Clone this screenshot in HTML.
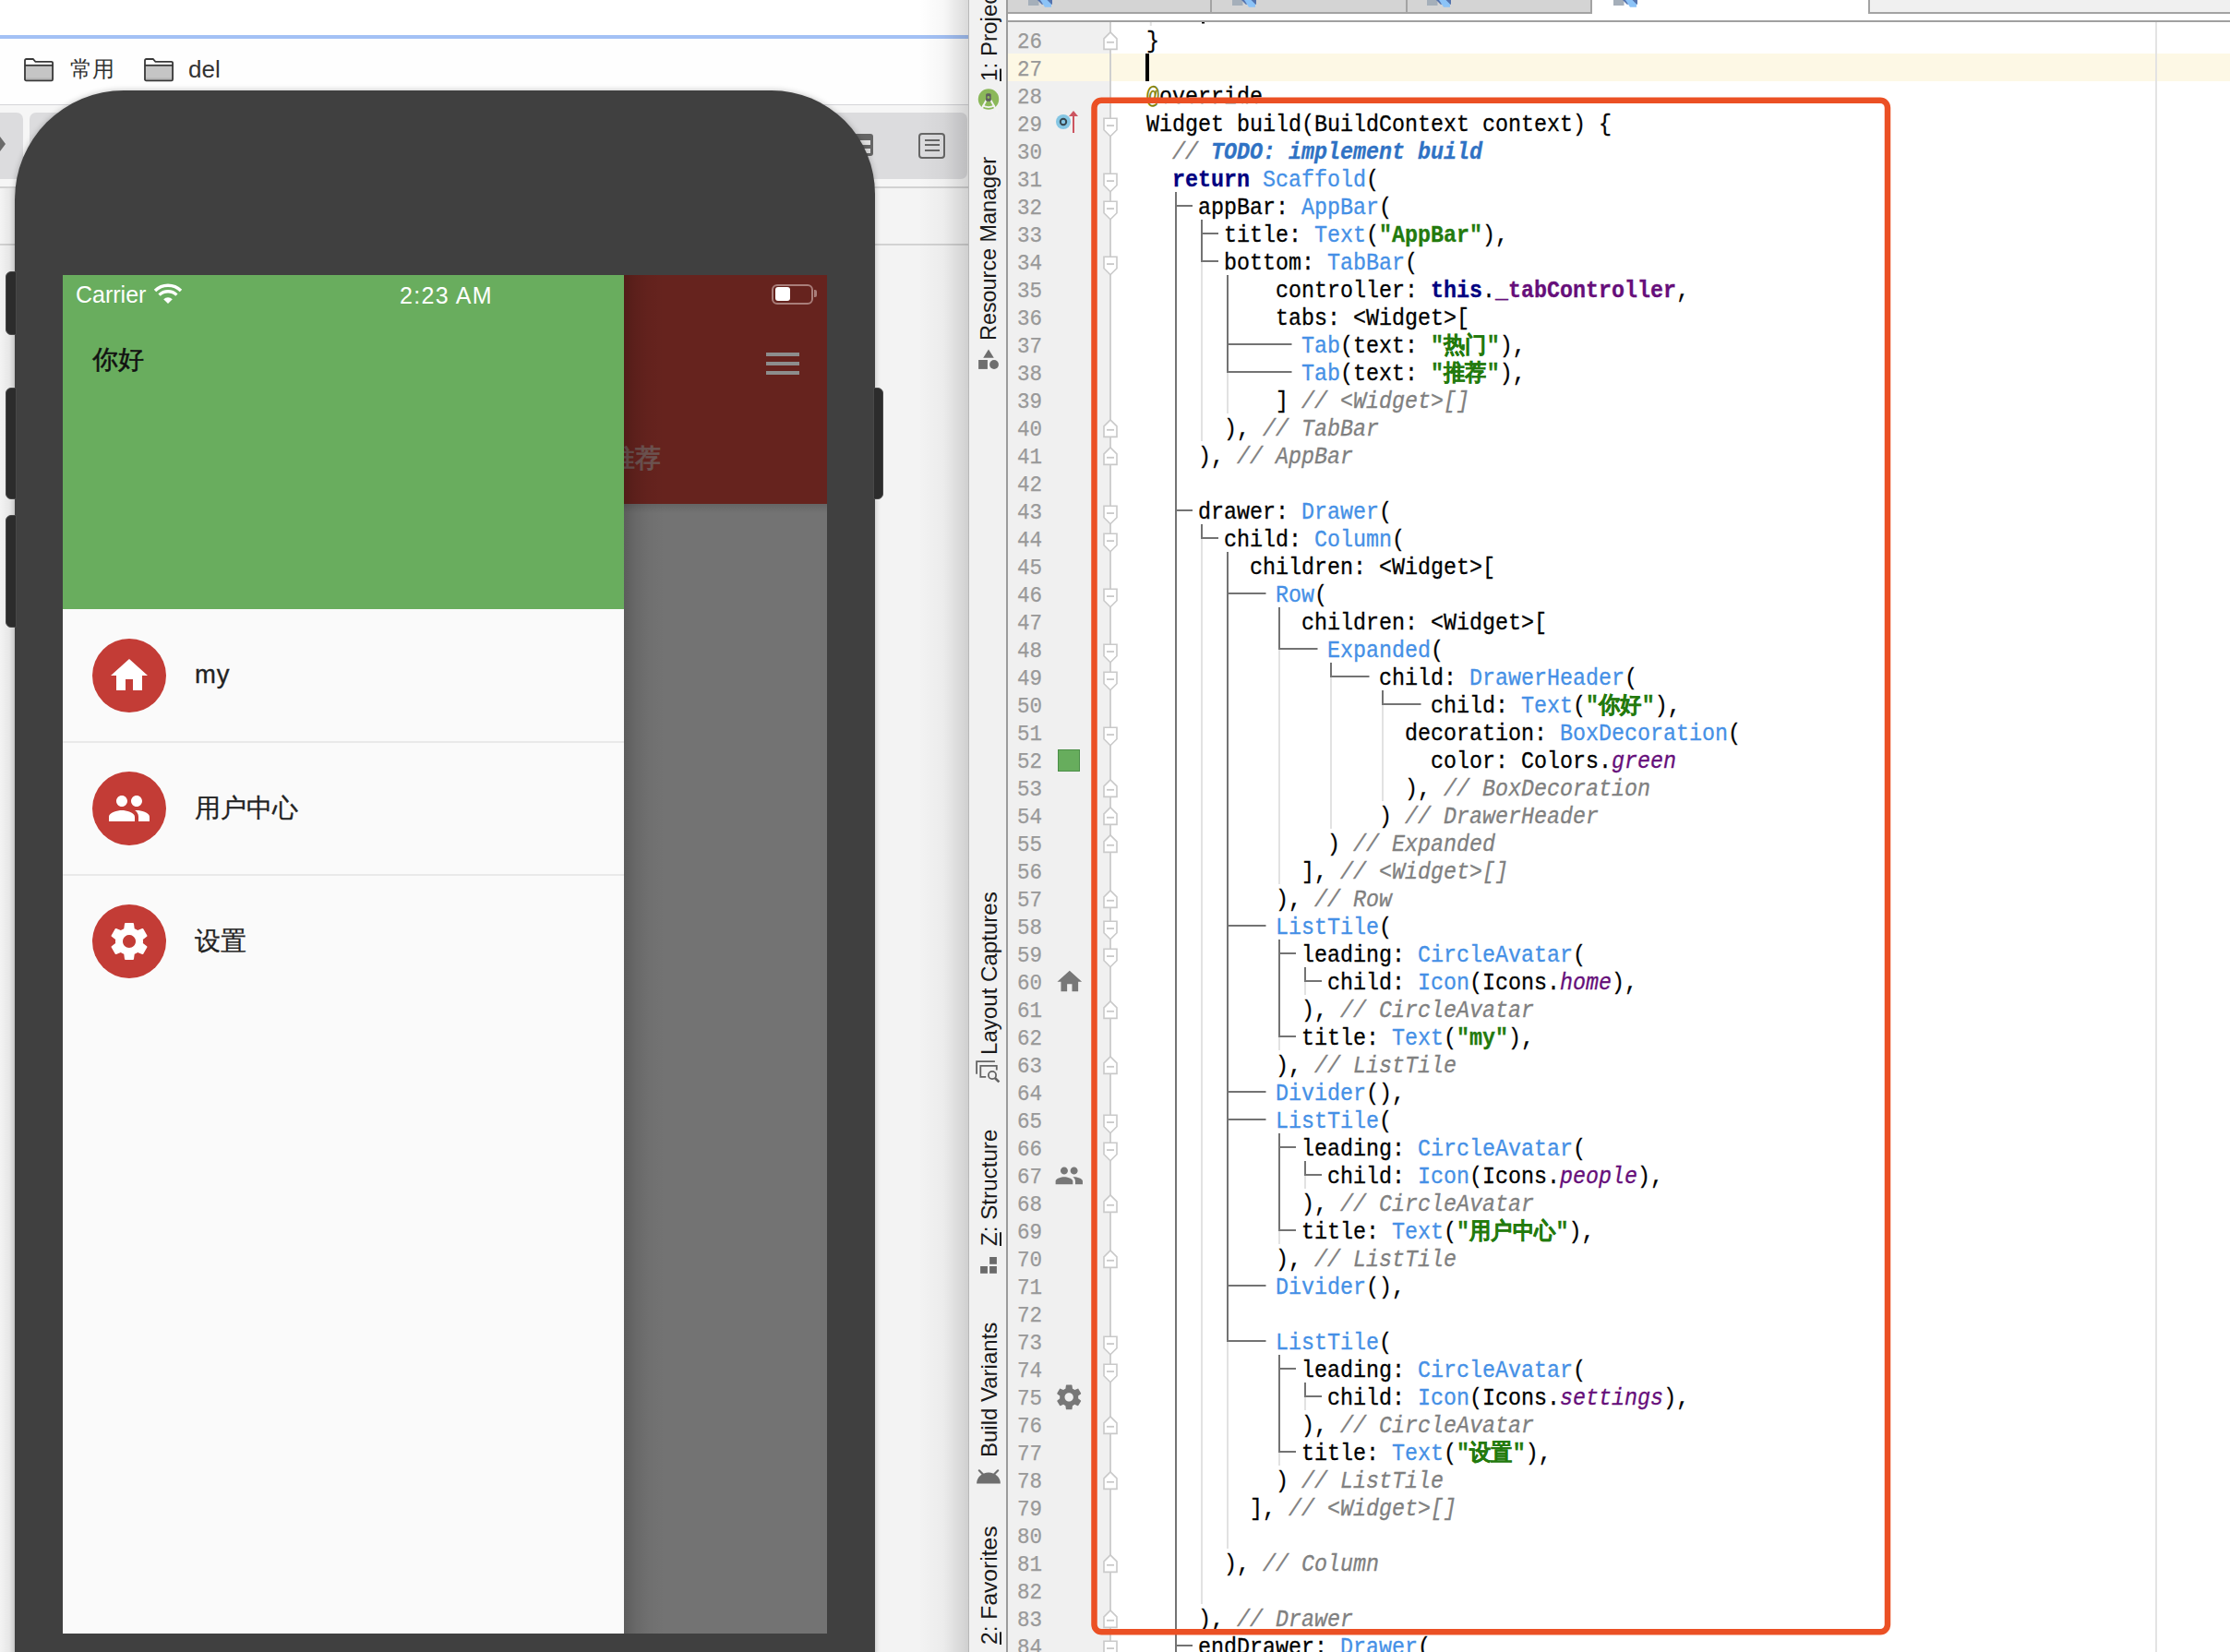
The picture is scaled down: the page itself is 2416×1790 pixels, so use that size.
<!DOCTYPE html>
<html><head><meta charset="utf-8">
<style>
*{box-sizing:border-box}
html,body{margin:0;padding:0}
body{width:2416px;height:1790px;overflow:hidden;position:relative;background:#fff;font-family:"Liberation Sans",sans-serif}
.abs{position:absolute}
/* browser */
#browser{position:absolute;left:0;top:0;width:1050px;height:1790px;background:#f3f3f3;overflow:hidden}
#bshade{position:absolute;left:995px;top:0;width:55px;height:1790px;background:linear-gradient(to right,rgba(0,0,0,0),rgba(0,0,0,0.03) 50%,rgba(0,0,0,0.15))}
#lshade{position:absolute;left:0;top:204px;width:16px;height:1590px;background:linear-gradient(to right,rgba(0,0,0,0),rgba(0,0,0,0.08))}
/* phone */
#phone{position:absolute;left:16px;top:98px;width:932px;height:1800px;background:#404040;border-radius:118px 112px 0 0;box-shadow:0 0 6px rgba(0,0,0,0.25)}
.btn{position:absolute;background:#2c2c2c;border:1.5px solid #484848}
#screen{position:absolute;left:68px;top:298px;width:828px;height:1472px;background:#737373;overflow:hidden}
/* ide */
#ide{position:absolute;left:1050px;top:0;width:1366px;height:1790px;background:#fff;overflow:hidden}
.cl{position:absolute;height:30px;line-height:30px;white-space:pre;font-family:"Liberation Mono",monospace;font-size:25px;color:#000;transform-origin:0 0;transform:scaleX(0.9334);-webkit-text-stroke:0.3px currentColor}
.ln{position:absolute;left:1081px;width:48px;-webkit-text-stroke:0.25px currentColor;text-align:right;height:30px;line-height:30px;font-family:"Liberation Mono",monospace;font-size:24px;color:#999;transform-origin:100% 0;transform:scaleX(0.94)}
.k{color:#000080;font-weight:bold}
.c{color:#4590e6}
.s{color:#237a0d;font-weight:bold}
.m{color:#808080;font-style:italic}
.t{color:#2f72c4;font-weight:bold;font-style:italic}
.f{color:#660e7a;font-weight:bold}
.i{color:#660e7a;font-style:italic}
.a{color:#808000}
.vt{position:absolute;transform-origin:0 0;transform:rotate(-90deg);white-space:nowrap;font-size:24.2px;color:#1a1a1a}
.av{position:absolute;left:100px;width:80px;height:80px;border-radius:50%;background:#c33c36}
.avi{position:absolute;left:116px}
.item{position:absolute;left:211px;font-size:27.5px;color:#222;-webkit-text-stroke:0.3px #222}
</style></head><body>
<div id="browser">
  <div class="abs" style="left:0;top:0;width:1050px;height:38px;background:#fff"></div>
  <div class="abs" style="left:0;top:38px;width:1050px;height:4px;background:#a3c1f5"></div>
  <div class="abs" style="left:0;top:42px;width:1050px;height:71px;background:#fefefe"></div>
  <div class="abs" style="left:0;top:112.5px;width:1050px;height:1.5px;background:#d4d4d8"></div>
  <div class="abs" style="left:0;top:114px;width:1050px;height:88px;background:#f6f6f6"></div>
  <div class="abs" style="left:-8px;top:122px;width:33px;height:72px;border-radius:7px;background:#dcdcde"></div>
  <div class="abs" style="left:32px;top:122px;width:1016px;height:72px;border-radius:7px;background:#dcdcde"></div>
  <div class="abs" style="left:0;top:148px;width:0;height:0;border-top:8px solid transparent;border-bottom:8px solid transparent;border-left:6px solid #6a6a6a"></div>
  <div class="abs" style="left:995px;top:144px;width:29px;height:28px;border:2px solid #666;border-radius:4px"></div>
  <div class="abs" style="left:1002px;top:150.5px;width:16px;height:2px;background:#666"></div>
  <div class="abs" style="left:1002px;top:156px;width:16px;height:2px;background:#666"></div>
  <div class="abs" style="left:1002px;top:161.5px;width:16px;height:2px;background:#666"></div>
  <div class="abs" style="left:920px;top:145px;width:26px;height:24px;border-radius:3px;background:#656565"></div>
  <div class="abs" style="left:922px;top:152px;width:21px;height:5.3px;background:#e0e0e0"></div>
  <div class="abs" style="left:922px;top:161px;width:21px;height:5px;background:#e0e0e0"></div>
  <div class="abs" style="left:0;top:202px;width:1050px;height:2px;background:#d2d2d2"></div>
  <div class="abs" style="left:0;top:204px;width:1050px;height:60px;background:#f4f4f4"></div>
  <div class="abs" style="left:0;top:264px;width:1050px;height:2px;background:#d2d2d2"></div>
  <!-- bookmarks -->
  <svg class="abs" style="left:26px;top:63px" width="33" height="26" viewBox="0 0 33 26"><path d="M1 2.5a1.5 1.5 0 0 1 1.5-1.5h7.3l2.6 2.8h17.2a1.5 1.5 0 0 1 1.5 1.5v17.6a1.5 1.5 0 0 1-1.5 1.5h-27.1a1.5 1.5 0 0 1-1.5-1.5z" fill="#fff"/><rect x="1.5" y="8" width="29.5" height="15.5" fill="#c5c5c5"/><rect x="1.5" y="21.5" width="29.5" height="2" fill="#b4b4b4"/><path d="M1 7.8h30.6" stroke="#383838" stroke-width="1.8"/><path d="M1 2.5a1.5 1.5 0 0 1 1.5-1.5h7.3l2.6 2.8h17.2a1.5 1.5 0 0 1 1.5 1.5v17.6a1.5 1.5 0 0 1-1.5 1.5h-27.1a1.5 1.5 0 0 1-1.5-1.5z" fill="none" stroke="#383838" stroke-width="1.8"/></svg>
  <div class="abs" style="left:76px;top:60px;font-size:24px;color:#333;line-height:30px">常用</div>
  <svg class="abs" style="left:156px;top:63px" width="33" height="26" viewBox="0 0 33 26"><path d="M1 2.5a1.5 1.5 0 0 1 1.5-1.5h7.3l2.6 2.8h17.2a1.5 1.5 0 0 1 1.5 1.5v17.6a1.5 1.5 0 0 1-1.5 1.5h-27.1a1.5 1.5 0 0 1-1.5-1.5z" fill="#fff"/><rect x="1.5" y="8" width="29.5" height="15.5" fill="#c5c5c5"/><rect x="1.5" y="21.5" width="29.5" height="2" fill="#b4b4b4"/><path d="M1 7.8h30.6" stroke="#383838" stroke-width="1.8"/><path d="M1 2.5a1.5 1.5 0 0 1 1.5-1.5h7.3l2.6 2.8h17.2a1.5 1.5 0 0 1 1.5 1.5v17.6a1.5 1.5 0 0 1-1.5 1.5h-27.1a1.5 1.5 0 0 1-1.5-1.5z" fill="none" stroke="#383838" stroke-width="1.8"/></svg>
  <div class="abs" style="left:204px;top:60px;font-size:26px;color:#333;line-height:30px">del</div>
  <div id="bshade"></div>
  <div id="lshade"></div>
  <div class="abs" style="left:1048.5px;top:0;width:1.5px;height:1790px;background:#b8b8b8"></div>
</div>

<div id="phone"></div>
<div class="btn" style="left:6px;top:294px;width:12px;height:69px;border-radius:6px 0 0 6px"></div>
<div class="btn" style="left:6px;top:420px;width:12px;height:121px;border-radius:6px 0 0 6px"></div>
<div class="btn" style="left:6px;top:558px;width:12px;height:122px;border-radius:6px 0 0 6px"></div>
<div class="btn" style="left:946px;top:420px;width:11px;height:121px;border-radius:0 6px 6px 0"></div>

<div id="screen">
  <div class="abs" style="left:0;top:0;width:828px;height:248px;background:#66231e"></div>
  <div class="abs" style="left:0;top:248px;width:828px;height:10px;background:linear-gradient(rgba(0,0,0,0.12),rgba(0,0,0,0))"></div>
  <div class="abs" style="left:762px;top:84px;width:36px;height:4px;background:#8d8d8d"></div>
  <div class="abs" style="left:762px;top:94px;width:36px;height:4px;background:#8d8d8d"></div>
  <div class="abs" style="left:762px;top:104px;width:36px;height:4px;background:#8d8d8d"></div>
  <div class="abs" style="left:768px;top:9.5px;width:45px;height:22px;border:2px solid #a97e7a;border-radius:6px"></div>
  <div class="abs" style="left:772px;top:13px;width:16px;height:15px;background:#fff;border-radius:3px"></div>
  <div class="abs" style="left:814px;top:16px;width:3px;height:8px;background:#a97e7a;border-radius:0 2px 2px 0"></div>
  <div class="abs" style="left:592px;top:181px;font-size:28px;color:#6e5552;line-height:36px;-webkit-text-stroke:0.9px #6e5552">推荐</div>
  <div class="abs" style="left:608px;top:0;width:44px;height:1472px;background:linear-gradient(to right,rgba(0,0,0,0.2),rgba(0,0,0,0.09) 30%,rgba(0,0,0,0.03) 60%,rgba(0,0,0,0))"></div>
  <!-- drawer -->
  <div class="abs" style="left:0;top:0;width:608px;height:1472px;background:#fafafa">
    <div class="abs" style="left:0;top:0;width:608px;height:362px;background:#69ad5e"></div>
  </div>
</div>
<!-- status bar and drawer content in page coords -->
<div class="abs" style="left:82px;top:303.5px;font-size:25px;color:#fff;line-height:30px">Carrier</div>
<svg class="abs" style="left:166px;top:306px" width="32" height="24" viewBox="0 0 32 24"><path d="M16 23 L11.2 18.2 A7 7 0 0 1 20.8 18.2 Z" fill="#fff"/><path d="M6.6 13.6 A13.5 13.5 0 0 1 25.4 13.6" fill="none" stroke="#fff" stroke-width="3.4"/><path d="M2 9 A20 20 0 0 1 30 9" fill="none" stroke="#fff" stroke-width="3.4"/></svg>
<div class="abs" style="left:433px;top:304.5px;font-size:25px;color:#fff;line-height:30px;letter-spacing:1.3px">2:23 AM</div>
<div class="abs" style="left:100px;top:373px;font-size:28px;color:#111;line-height:34px;-webkit-text-stroke:0.5px #111">你好</div>
<div class="av" style="top:692px"></div><svg class="avi" style="top:708px" viewBox="0 0 24 24" width="48" height="48"><path d="M10 20v-6h4v6h5v-8h3L12 3 2 12h3v8z" fill="#fff"/></svg><div class="av" style="top:836px"></div><svg class="avi" style="top:852px" viewBox="0 0 24 24" width="48" height="48"><path d="M16 11c1.66 0 2.99-1.34 2.99-3S17.66 5 16 5c-1.66 0-3 1.34-3 3s1.34 3 3 3zm-8 0c1.66 0 2.99-1.34 2.99-3S9.66 5 8 5C6.34 5 5 6.34 5 8s1.34 3 3 3zm0 2c-2.33 0-7 1.17-7 3.5V19h14v-2.5c0-2.33-4.67-3.5-7-3.5zm8 0c-.29 0-.62.02-.97.05 1.16.84 1.97 1.97 1.97 3.45V19h6v-2.5c0-2.33-4.67-3.5-7-3.5z" fill="#fff"/></svg><div class="av" style="top:980px"></div><svg class="avi" style="top:996px" viewBox="0 0 24 24" width="48" height="48"><path d="M19.43 12.98c.04-.32.07-.64.07-.98s-.03-.66-.07-.98l2.11-1.65c.19-.15.24-.42.12-.64l-2-3.46c-.12-.22-.39-.3-.61-.22l-2.49 1c-.52-.4-1.08-.73-1.69-.98l-.38-2.65C14.46 2.18 14.25 2 14 2h-4c-.25 0-.46.18-.49.42l-.38 2.65c-.61.25-1.17.59-1.69.98l-2.49-1c-.23-.09-.49 0-.61.22l-2 3.46c-.13.22-.07.49.12.64l2.11 1.65c-.04.32-.07.65-.07.98s.03.66.07.98l-2.11 1.65c-.19.15-.24.42-.12.64l2 3.46c.12.22.39.3.61.22l2.49-1c.52.4 1.08.73 1.69.98l.38 2.65c.03.24.24.42.49.42h4c.25 0 .46-.18.49-.42l.38-2.65c.61-.25 1.17-.59 1.69-.98l2.49 1c.23.09.49 0 .61-.22l2-3.46c.12-.22.07-.49-.12-.64l-2.11-1.65zM12 15.5c-1.93 0-3.5-1.57-3.5-3.5s1.57-3.5 3.5-3.5 3.5 1.57 3.5 3.5-1.57 3.5-3.5 3.5z" fill="#fff"/></svg>
<div class="item" style="top:713px;line-height:36px;letter-spacing:0.8px">my</div>
<div class="abs" style="left:68px;top:803px;width:608px;height:2px;background:#e9e9e9"></div>
<div class="item" style="top:858px;line-height:36px">用户中心</div>
<div class="abs" style="left:68px;top:947px;width:608px;height:2px;background:#e9e9e9"></div>
<div class="item" style="top:1002px;line-height:36px">设置</div>

<div id="ide">
  <!-- tool strip -->
  <div class="abs" style="left:0;top:0;width:40px;height:1790px;background:#f1f1f1"></div>
  <div class="abs" style="left:39.5px;top:0;width:2px;height:1790px;background:#9c9c9c"></div>
  <!-- tabs -->
  <div class="abs" style="left:42px;top:0;width:1324px;height:14px;background:#f0f0f0"></div>
  <div class="abs" style="left:42px;top:0;width:631px;height:13px;background:#d4d4d4"></div>
  <div class="abs" style="left:42px;top:13px;width:631px;height:2px;background:#a3a3a3"></div>
  <div class="abs" style="left:260.5px;top:0;width:2px;height:14px;background:#a3a3a3"></div>
  <div class="abs" style="left:472.5px;top:0;width:2px;height:14px;background:#a3a3a3"></div>
  <div class="abs" style="left:675px;top:0;width:299px;height:15px;background:#fff"></div>
  <div class="abs" style="left:673px;top:0;width:2px;height:15px;background:#a3a3a3"></div>
  <div class="abs" style="left:974px;top:0;width:2px;height:15px;background:#a3a3a3"></div>
  <div class="abs" style="left:976px;top:13px;width:390px;height:2px;background:#a3a3a3"></div>
  <div class="abs" style="left:42px;top:15px;width:1324px;height:7.5px;background:#fff"></div>
  <div class="abs" style="left:42px;top:22px;width:1324px;height:2px;background:#a0a0a0"></div>
  <svg class="abs" style="left:64.0px;top:0" width="28" height="9" viewBox="0 0 28 9"><rect x="0" y="0" width="11.5" height="6" fill="#a5afba"/><path d="M10 0h16v4.7h-11.3z" fill="#5473ad"/><path d="M13 0h7.5l4.5 4.6v3.2h-7z" fill="#8cc3f7"/></svg><svg class="abs" style="left:284.5px;top:0" width="28" height="9" viewBox="0 0 28 9"><rect x="0" y="0" width="11.5" height="6" fill="#a5afba"/><path d="M10 0h16v4.7h-11.3z" fill="#5473ad"/><path d="M13 0h7.5l4.5 4.6v3.2h-7z" fill="#8cc3f7"/></svg><svg class="abs" style="left:495.6px;top:0" width="28" height="9" viewBox="0 0 28 9"><rect x="0" y="0" width="11.5" height="6" fill="#a5afba"/><path d="M10 0h16v4.7h-11.3z" fill="#5473ad"/><path d="M13 0h7.5l4.5 4.6v3.2h-7z" fill="#8cc3f7"/></svg><svg class="abs" style="left:698.0px;top:0" width="28" height="9" viewBox="0 0 28 9"><rect x="0" y="0" width="11.5" height="6" fill="#a5afba"/><path d="M10 0h16v4.7h-11.3z" fill="#5473ad"/><path d="M13 0h7.5l4.5 4.6v3.2h-7z" fill="#8cc3f7"/></svg>
  <!-- gutter -->
  <div class="abs" style="left:42px;top:24px;width:111px;height:1766px;background:#f0f0f0"></div>
  <div class="abs" style="left:1285px;top:24px;width:1.5px;height:1766px;background:#e3e3e3"></div>
</div>
<!-- current line highlight -->
<div class="abs" style="left:1092px;top:58px;width:1324px;height:30px;background:#fdf8e5"></div>
<div class="abs" style="left:1202px;top:24px;width:2px;height:1766px;background:#cfcfcf"></div>
<div class="abs" style="left:2335px;top:24px;width:1.5px;height:1766px;background:#e3e3e3"></div>
<div class="abs" style="left:1241px;top:58px;width:4px;height:30px;background:#000"></div>
<div class="ln" style="top:31.0px">26</div><div class="ln" style="top:61.0px">27</div><div class="ln" style="top:91.0px">28</div><div class="ln" style="top:121.0px">29</div><div class="ln" style="top:151.0px">30</div><div class="ln" style="top:181.0px">31</div><div class="ln" style="top:211.0px">32</div><div class="ln" style="top:241.0px">33</div><div class="ln" style="top:271.0px">34</div><div class="ln" style="top:301.0px">35</div><div class="ln" style="top:331.0px">36</div><div class="ln" style="top:361.0px">37</div><div class="ln" style="top:391.0px">38</div><div class="ln" style="top:421.0px">39</div><div class="ln" style="top:451.0px">40</div><div class="ln" style="top:481.0px">41</div><div class="ln" style="top:511.0px">42</div><div class="ln" style="top:541.0px">43</div><div class="ln" style="top:571.0px">44</div><div class="ln" style="top:601.0px">45</div><div class="ln" style="top:631.0px">46</div><div class="ln" style="top:661.0px">47</div><div class="ln" style="top:691.0px">48</div><div class="ln" style="top:721.0px">49</div><div class="ln" style="top:751.0px">50</div><div class="ln" style="top:781.0px">51</div><div class="ln" style="top:811.0px">52</div><div class="ln" style="top:841.0px">53</div><div class="ln" style="top:871.0px">54</div><div class="ln" style="top:901.0px">55</div><div class="ln" style="top:931.0px">56</div><div class="ln" style="top:961.0px">57</div><div class="ln" style="top:991.0px">58</div><div class="ln" style="top:1021.0px">59</div><div class="ln" style="top:1051.0px">60</div><div class="ln" style="top:1081.0px">61</div><div class="ln" style="top:1111.0px">62</div><div class="ln" style="top:1141.0px">63</div><div class="ln" style="top:1171.0px">64</div><div class="ln" style="top:1201.0px">65</div><div class="ln" style="top:1231.0px">66</div><div class="ln" style="top:1261.0px">67</div><div class="ln" style="top:1291.0px">68</div><div class="ln" style="top:1321.0px">69</div><div class="ln" style="top:1351.0px">70</div><div class="ln" style="top:1381.0px">71</div><div class="ln" style="top:1411.0px">72</div><div class="ln" style="top:1441.0px">73</div><div class="ln" style="top:1471.0px">74</div><div class="ln" style="top:1501.0px">75</div><div class="ln" style="top:1531.0px">76</div><div class="ln" style="top:1561.0px">77</div><div class="ln" style="top:1591.0px">78</div><div class="ln" style="top:1621.0px">79</div><div class="ln" style="top:1651.0px">80</div><div class="ln" style="top:1681.0px">81</div><div class="ln" style="top:1711.0px">82</div><div class="ln" style="top:1741.0px">83</div><div class="ln" style="top:1771.0px">84</div>
<div class="cl" style="top:30.5px;left:1241.5px">}</div><div class="cl" style="top:90.5px;left:1241.5px"><span class="a">@</span>override</div><div class="cl" style="top:120.5px;left:1241.5px">Widget build(BuildContext context) {</div><div class="cl" style="top:150.5px;left:1269.5px"><span class="m">// </span><span class="t">TODO: implement build</span></div><div class="cl" style="top:180.5px;left:1269.5px"><span class="k">return</span> <span class="c">Scaffold</span>(</div><div class="cl" style="top:210.5px;left:1297.5px">appBar: <span class="c">AppBar</span>(</div><div class="cl" style="top:240.5px;left:1325.5px">title: <span class="c">Text</span>(<span class="s">&quot;AppBar&quot;</span>),</div><div class="cl" style="top:270.5px;left:1325.5px">bottom: <span class="c">TabBar</span>(</div><div class="cl" style="top:300.5px;left:1381.5px">controller: <span class="k">this</span>.<span class="f">_tabController</span>,</div><div class="cl" style="top:330.5px;left:1381.5px">tabs: &lt;Widget&gt;[</div><div class="cl" style="top:360.5px;left:1409.5px"><span class="c">Tab</span>(text: <span class="s">&quot;热门&quot;</span>),</div><div class="cl" style="top:390.5px;left:1409.5px"><span class="c">Tab</span>(text: <span class="s">&quot;推荐&quot;</span>),</div><div class="cl" style="top:420.5px;left:1381.5px">] <span class="m">// &lt;Widget&gt;[]</span></div><div class="cl" style="top:450.5px;left:1325.5px">), <span class="m">// TabBar</span></div><div class="cl" style="top:480.5px;left:1297.5px">), <span class="m">// AppBar</span></div><div class="cl" style="top:540.5px;left:1297.5px">drawer: <span class="c">Drawer</span>(</div><div class="cl" style="top:570.5px;left:1325.5px">child: <span class="c">Column</span>(</div><div class="cl" style="top:600.5px;left:1353.5px">children: &lt;Widget&gt;[</div><div class="cl" style="top:630.5px;left:1381.5px"><span class="c">Row</span>(</div><div class="cl" style="top:660.5px;left:1409.5px">children: &lt;Widget&gt;[</div><div class="cl" style="top:690.5px;left:1437.5px"><span class="c">Expanded</span>(</div><div class="cl" style="top:720.5px;left:1493.5px">child: <span class="c">DrawerHeader</span>(</div><div class="cl" style="top:750.5px;left:1549.5px">child: <span class="c">Text</span>(<span class="s">&quot;你好&quot;</span>),</div><div class="cl" style="top:780.5px;left:1521.5px">decoration: <span class="c">BoxDecoration</span>(</div><div class="cl" style="top:810.5px;left:1549.5px">color: Colors.<span class="i">green</span></div><div class="cl" style="top:840.5px;left:1521.5px">), <span class="m">// BoxDecoration</span></div><div class="cl" style="top:870.5px;left:1493.5px">) <span class="m">// DrawerHeader</span></div><div class="cl" style="top:900.5px;left:1437.5px">) <span class="m">// Expanded</span></div><div class="cl" style="top:930.5px;left:1409.5px">], <span class="m">// &lt;Widget&gt;[]</span></div><div class="cl" style="top:960.5px;left:1381.5px">), <span class="m">// Row</span></div><div class="cl" style="top:990.5px;left:1381.5px"><span class="c">ListTile</span>(</div><div class="cl" style="top:1020.5px;left:1409.5px">leading: <span class="c">CircleAvatar</span>(</div><div class="cl" style="top:1050.5px;left:1437.5px">child: <span class="c">Icon</span>(Icons.<span class="i">home</span>),</div><div class="cl" style="top:1080.5px;left:1409.5px">), <span class="m">// CircleAvatar</span></div><div class="cl" style="top:1110.5px;left:1409.5px">title: <span class="c">Text</span>(<span class="s">&quot;my&quot;</span>),</div><div class="cl" style="top:1140.5px;left:1381.5px">), <span class="m">// ListTile</span></div><div class="cl" style="top:1170.5px;left:1381.5px"><span class="c">Divider</span>(),</div><div class="cl" style="top:1200.5px;left:1381.5px"><span class="c">ListTile</span>(</div><div class="cl" style="top:1230.5px;left:1409.5px">leading: <span class="c">CircleAvatar</span>(</div><div class="cl" style="top:1260.5px;left:1437.5px">child: <span class="c">Icon</span>(Icons.<span class="i">people</span>),</div><div class="cl" style="top:1290.5px;left:1409.5px">), <span class="m">// CircleAvatar</span></div><div class="cl" style="top:1320.5px;left:1409.5px">title: <span class="c">Text</span>(<span class="s">&quot;用户中心&quot;</span>),</div><div class="cl" style="top:1350.5px;left:1381.5px">), <span class="m">// ListTile</span></div><div class="cl" style="top:1380.5px;left:1381.5px"><span class="c">Divider</span>(),</div><div class="cl" style="top:1440.5px;left:1381.5px"><span class="c">ListTile</span>(</div><div class="cl" style="top:1470.5px;left:1409.5px">leading: <span class="c">CircleAvatar</span>(</div><div class="cl" style="top:1500.5px;left:1437.5px">child: <span class="c">Icon</span>(Icons.<span class="i">settings</span>),</div><div class="cl" style="top:1530.5px;left:1409.5px">), <span class="m">// CircleAvatar</span></div><div class="cl" style="top:1560.5px;left:1409.5px">title: <span class="c">Text</span>(<span class="s">&quot;设置&quot;</span>),</div><div class="cl" style="top:1590.5px;left:1381.5px">) <span class="m">// ListTile</span></div><div class="cl" style="top:1620.5px;left:1353.5px">], <span class="m">// &lt;Widget&gt;[]</span></div><div class="cl" style="top:1680.5px;left:1325.5px">), <span class="m">// Column</span></div><div class="cl" style="top:1740.5px;left:1297.5px">), <span class="m">// Drawer</span></div><div class="cl" style="top:1770.5px;left:1297.5px">endDrawer: <span class="c">Drawer</span>(</div>
<svg class="abs" style="left:0;top:0" width="2416" height="1790"><rect x="1301.0" y="283.0" width="2" height="195.0" fill="#e2e2e2"/><rect x="1329.0" y="403.0" width="2" height="45.0" fill="#e2e2e2"/><rect x="1301.0" y="583.0" width="2" height="1155.0" fill="#e2e2e2"/><rect x="1329.0" y="1453.0" width="2" height="225.0" fill="#e2e2e2"/><rect x="1385.0" y="703.0" width="2" height="255.0" fill="#e2e2e2"/><rect x="1441.0" y="733.0" width="2" height="165.0" fill="#e2e2e2"/><rect x="1497.0" y="763.0" width="2" height="105.0" fill="#e2e2e2"/><rect x="1385.0" y="1123.0" width="2" height="15.0" fill="#e2e2e2"/><rect x="1413.0" y="1063.0" width="2" height="15.0" fill="#e2e2e2"/><rect x="1385.0" y="1333.0" width="2" height="15.0" fill="#e2e2e2"/><rect x="1413.0" y="1273.0" width="2" height="15.0" fill="#e2e2e2"/><rect x="1385.0" y="1573.0" width="2" height="15.0" fill="#e2e2e2"/><rect x="1413.0" y="1513.0" width="2" height="15.0" fill="#e2e2e2"/><rect x="1273.0" y="208.0" width="2" height="1582.0" fill="#737373"/><rect x="1301.0" y="238.0" width="2" height="45.0" fill="#737373"/><rect x="1329.0" y="298.0" width="2" height="105.0" fill="#737373"/><rect x="1301.0" y="568.0" width="2" height="15.0" fill="#737373"/><rect x="1329.0" y="598.0" width="2" height="855.0" fill="#737373"/><rect x="1385.0" y="658.0" width="2" height="45.0" fill="#737373"/><rect x="1441.0" y="718.0" width="2" height="15.0" fill="#737373"/><rect x="1497.0" y="748.0" width="2" height="15.0" fill="#737373"/><rect x="1385.0" y="1018.0" width="2" height="105.0" fill="#737373"/><rect x="1413.0" y="1048.0" width="2" height="15.0" fill="#737373"/><rect x="1385.0" y="1228.0" width="2" height="105.0" fill="#737373"/><rect x="1413.0" y="1258.0" width="2" height="15.0" fill="#737373"/><rect x="1385.0" y="1468.0" width="2" height="105.0" fill="#737373"/><rect x="1413.0" y="1498.0" width="2" height="15.0" fill="#737373"/><rect x="1273.0" y="222.0" width="19.0" height="2" fill="#737373"/><rect x="1273.0" y="552.0" width="19.0" height="2" fill="#737373"/><rect x="1273.0" y="1782.0" width="19.0" height="2" fill="#737373"/><rect x="1301.0" y="252.0" width="19.0" height="2" fill="#737373"/><rect x="1301.0" y="282.0" width="19.0" height="2" fill="#737373"/><rect x="1329.0" y="372.0" width="70.5" height="2" fill="#737373"/><rect x="1329.0" y="402.0" width="70.5" height="2" fill="#737373"/><rect x="1301.0" y="582.0" width="19.0" height="2" fill="#737373"/><rect x="1329.0" y="642.0" width="42.5" height="2" fill="#737373"/><rect x="1329.0" y="1002.0" width="42.5" height="2" fill="#737373"/><rect x="1329.0" y="1182.0" width="42.5" height="2" fill="#737373"/><rect x="1329.0" y="1212.0" width="42.5" height="2" fill="#737373"/><rect x="1329.0" y="1392.0" width="42.5" height="2" fill="#737373"/><rect x="1329.0" y="1452.0" width="42.5" height="2" fill="#737373"/><rect x="1385.0" y="702.0" width="42.5" height="2" fill="#737373"/><rect x="1441.0" y="732.0" width="42.5" height="2" fill="#737373"/><rect x="1497.0" y="762.0" width="42.5" height="2" fill="#737373"/><rect x="1385.0" y="1032.0" width="19.0" height="2" fill="#737373"/><rect x="1385.0" y="1122.0" width="19.0" height="2" fill="#737373"/><rect x="1413.0" y="1062.0" width="19.0" height="2" fill="#737373"/><rect x="1385.0" y="1242.0" width="19.0" height="2" fill="#737373"/><rect x="1385.0" y="1332.0" width="19.0" height="2" fill="#737373"/><rect x="1413.0" y="1272.0" width="19.0" height="2" fill="#737373"/><rect x="1385.0" y="1482.0" width="19.0" height="2" fill="#737373"/><rect x="1385.0" y="1572.0" width="19.0" height="2" fill="#737373"/><rect x="1413.0" y="1512.0" width="19.0" height="2" fill="#737373"/><rect x="1245.8" y="24" width="2" height="4" fill="#e2e2e2"/><rect x="1302" y="24" width="3" height="1.5" fill="#000"/><path d="M1196.0 128.2h14v12.5l-7 7l-7 -7z" fill="#fff" stroke="#c9c9c9" stroke-width="1.6"/><rect x="1199.0" y="135.2" width="8" height="1.8" fill="#c9c9c9"/><path d="M1196.0 188.2h14v12.5l-7 7l-7 -7z" fill="#fff" stroke="#c9c9c9" stroke-width="1.6"/><rect x="1199.0" y="195.2" width="8" height="1.8" fill="#c9c9c9"/><path d="M1196.0 218.2h14v12.5l-7 7l-7 -7z" fill="#fff" stroke="#c9c9c9" stroke-width="1.6"/><rect x="1199.0" y="225.2" width="8" height="1.8" fill="#c9c9c9"/><path d="M1196.0 278.2h14v12.5l-7 7l-7 -7z" fill="#fff" stroke="#c9c9c9" stroke-width="1.6"/><rect x="1199.0" y="285.2" width="8" height="1.8" fill="#c9c9c9"/><path d="M1196.0 548.2h14v12.5l-7 7l-7 -7z" fill="#fff" stroke="#c9c9c9" stroke-width="1.6"/><rect x="1199.0" y="555.2" width="8" height="1.8" fill="#c9c9c9"/><path d="M1196.0 578.2h14v12.5l-7 7l-7 -7z" fill="#fff" stroke="#c9c9c9" stroke-width="1.6"/><rect x="1199.0" y="585.2" width="8" height="1.8" fill="#c9c9c9"/><path d="M1196.0 638.2h14v12.5l-7 7l-7 -7z" fill="#fff" stroke="#c9c9c9" stroke-width="1.6"/><rect x="1199.0" y="645.2" width="8" height="1.8" fill="#c9c9c9"/><path d="M1196.0 698.2h14v12.5l-7 7l-7 -7z" fill="#fff" stroke="#c9c9c9" stroke-width="1.6"/><rect x="1199.0" y="705.2" width="8" height="1.8" fill="#c9c9c9"/><path d="M1196.0 728.2h14v12.5l-7 7l-7 -7z" fill="#fff" stroke="#c9c9c9" stroke-width="1.6"/><rect x="1199.0" y="735.2" width="8" height="1.8" fill="#c9c9c9"/><path d="M1196.0 788.2h14v12.5l-7 7l-7 -7z" fill="#fff" stroke="#c9c9c9" stroke-width="1.6"/><rect x="1199.0" y="795.2" width="8" height="1.8" fill="#c9c9c9"/><path d="M1196.0 998.2h14v12.5l-7 7l-7 -7z" fill="#fff" stroke="#c9c9c9" stroke-width="1.6"/><rect x="1199.0" y="1005.2" width="8" height="1.8" fill="#c9c9c9"/><path d="M1196.0 1028.2h14v12.5l-7 7l-7 -7z" fill="#fff" stroke="#c9c9c9" stroke-width="1.6"/><rect x="1199.0" y="1035.2" width="8" height="1.8" fill="#c9c9c9"/><path d="M1196.0 1208.2h14v12.5l-7 7l-7 -7z" fill="#fff" stroke="#c9c9c9" stroke-width="1.6"/><rect x="1199.0" y="1215.2" width="8" height="1.8" fill="#c9c9c9"/><path d="M1196.0 1238.2h14v12.5l-7 7l-7 -7z" fill="#fff" stroke="#c9c9c9" stroke-width="1.6"/><rect x="1199.0" y="1245.2" width="8" height="1.8" fill="#c9c9c9"/><path d="M1196.0 1448.2h14v12.5l-7 7l-7 -7z" fill="#fff" stroke="#c9c9c9" stroke-width="1.6"/><rect x="1199.0" y="1455.2" width="8" height="1.8" fill="#c9c9c9"/><path d="M1196.0 1478.2h14v12.5l-7 7l-7 -7z" fill="#fff" stroke="#c9c9c9" stroke-width="1.6"/><rect x="1199.0" y="1485.2" width="8" height="1.8" fill="#c9c9c9"/><path d="M1196.0 1778.2h14v12.5l-7 7l-7 -7z" fill="#fff" stroke="#c9c9c9" stroke-width="1.6"/><rect x="1199.0" y="1785.2" width="8" height="1.8" fill="#c9c9c9"/><path d="M1196.0 53.4h14v-11.5l-7 -7l-7 7z" fill="#fff" stroke="#c9c9c9" stroke-width="1.6"/><rect x="1199.0" y="44.9" width="8" height="1.8" fill="#c9c9c9"/><path d="M1196.0 473.4h14v-11.5l-7 -7l-7 7z" fill="#fff" stroke="#c9c9c9" stroke-width="1.6"/><rect x="1199.0" y="464.9" width="8" height="1.8" fill="#c9c9c9"/><path d="M1196.0 503.4h14v-11.5l-7 -7l-7 7z" fill="#fff" stroke="#c9c9c9" stroke-width="1.6"/><rect x="1199.0" y="494.9" width="8" height="1.8" fill="#c9c9c9"/><path d="M1196.0 863.4h14v-11.5l-7 -7l-7 7z" fill="#fff" stroke="#c9c9c9" stroke-width="1.6"/><rect x="1199.0" y="854.9" width="8" height="1.8" fill="#c9c9c9"/><path d="M1196.0 893.4h14v-11.5l-7 -7l-7 7z" fill="#fff" stroke="#c9c9c9" stroke-width="1.6"/><rect x="1199.0" y="884.9" width="8" height="1.8" fill="#c9c9c9"/><path d="M1196.0 923.4h14v-11.5l-7 -7l-7 7z" fill="#fff" stroke="#c9c9c9" stroke-width="1.6"/><rect x="1199.0" y="914.9" width="8" height="1.8" fill="#c9c9c9"/><path d="M1196.0 983.4h14v-11.5l-7 -7l-7 7z" fill="#fff" stroke="#c9c9c9" stroke-width="1.6"/><rect x="1199.0" y="974.9" width="8" height="1.8" fill="#c9c9c9"/><path d="M1196.0 1103.4h14v-11.5l-7 -7l-7 7z" fill="#fff" stroke="#c9c9c9" stroke-width="1.6"/><rect x="1199.0" y="1094.9" width="8" height="1.8" fill="#c9c9c9"/><path d="M1196.0 1163.4h14v-11.5l-7 -7l-7 7z" fill="#fff" stroke="#c9c9c9" stroke-width="1.6"/><rect x="1199.0" y="1154.9" width="8" height="1.8" fill="#c9c9c9"/><path d="M1196.0 1313.4h14v-11.5l-7 -7l-7 7z" fill="#fff" stroke="#c9c9c9" stroke-width="1.6"/><rect x="1199.0" y="1304.9" width="8" height="1.8" fill="#c9c9c9"/><path d="M1196.0 1373.4h14v-11.5l-7 -7l-7 7z" fill="#fff" stroke="#c9c9c9" stroke-width="1.6"/><rect x="1199.0" y="1364.9" width="8" height="1.8" fill="#c9c9c9"/><path d="M1196.0 1553.4h14v-11.5l-7 -7l-7 7z" fill="#fff" stroke="#c9c9c9" stroke-width="1.6"/><rect x="1199.0" y="1544.9" width="8" height="1.8" fill="#c9c9c9"/><path d="M1196.0 1613.4h14v-11.5l-7 -7l-7 7z" fill="#fff" stroke="#c9c9c9" stroke-width="1.6"/><rect x="1199.0" y="1604.9" width="8" height="1.8" fill="#c9c9c9"/><path d="M1196.0 1703.4h14v-11.5l-7 -7l-7 7z" fill="#fff" stroke="#c9c9c9" stroke-width="1.6"/><rect x="1199.0" y="1694.9" width="8" height="1.8" fill="#c9c9c9"/><path d="M1196.0 1763.4h14v-11.5l-7 -7l-7 7z" fill="#fff" stroke="#c9c9c9" stroke-width="1.6"/><rect x="1199.0" y="1754.9" width="8" height="1.8" fill="#c9c9c9"/><path transform="translate(1142.8 1047.7) scale(1.3333)" d="M10 20v-6h4v6h5v-8h3L12 3 2 12h3v8z" fill="#777"/><path transform="translate(1142.3 1257.8) scale(1.3333)" d="M16 11c1.66 0 2.99-1.34 2.99-3S17.66 5 16 5c-1.66 0-3 1.34-3 3s1.34 3 3 3zm-8 0c1.66 0 2.99-1.34 2.99-3S9.66 5 8 5C6.34 5 5 6.34 5 8s1.34 3 3 3zm0 2c-2.33 0-7 1.17-7 3.5V19h14v-2.5c0-2.33-4.67-3.5-7-3.5zm8 0c-.29 0-.62.02-.97.05 1.16.84 1.97 1.97 1.97 3.45V19h6v-2.5c0-2.33-4.67-3.5-7-3.5z" fill="#777"/><path transform="translate(1142.2 1497.9) scale(1.3333)" d="M19.43 12.98c.04-.32.07-.64.07-.98s-.03-.66-.07-.98l2.11-1.65c.19-.15.24-.42.12-.64l-2-3.46c-.12-.22-.39-.3-.61-.22l-2.49 1c-.52-.4-1.08-.73-1.69-.98l-.38-2.65C14.46 2.18 14.25 2 14 2h-4c-.25 0-.46.18-.49.42l-.38 2.65c-.61.25-1.17.59-1.69.98l-2.49-1c-.23-.09-.49 0-.61.22l-2 3.46c-.13.22-.07.49.12.64l2.11 1.65c-.04.32-.07.65-.07.98s.03.66.07.98l-2.11 1.65c-.19.15-.24.42-.12.64l2 3.46c.12.22.39.3.61.22l2.49-1c.52.4 1.08.73 1.69.98l.38 2.65c.03.24.24.42.49.42h4c.25 0 .46-.18.49-.42l.38-2.65c.61-.25 1.17-.59 1.69-.98l2.49 1c.23.09.49 0 .61-.22l2-3.46c.12-.22.07-.49-.12-.64l-2.11-1.65zM12 15.5c-1.93 0-3.5-1.57-3.5-3.5s1.57-3.5 3.5-3.5 3.5 1.57 3.5 3.5-1.57 3.5-3.5 3.5z" fill="#777"/><circle cx="1152" cy="132" r="8" fill="#85c6e3"/><circle cx="1152" cy="132" r="3.2" fill="none" stroke="#37474f" stroke-width="2"/><rect x="1162" y="125" width="2" height="19" fill="#cc5560"/><path d="M1158 126h10l-5 -6z" fill="#cc5560"/><rect x="1146.5" y="812.5" width="23" height="23" fill="#67ad5d" stroke="#4b8e47" stroke-width="1"/>
<rect x="1185.5" y="108.7" width="859.5" height="1659.6" rx="8" fill="none" stroke="#eb5024" stroke-width="6.5"/>
</svg>

<div class="vt" style="left:1058px;top:88px"><u style="text-decoration-thickness:2px;text-underline-offset:3px">1</u>: Project</div>
<svg class="abs" style="left:1055px;top:90px" width="35" height="35" viewBox="0 0 35 35"><circle cx="16" cy="17.5" r="11.2" fill="#8bb85a"/><path d="M6.5 31.5L13.6 18.6M25.5 31.5L18.4 18.6" stroke="#f2f2f2" stroke-width="2"/><path d="M9.5 24.3Q16 28 22.5 24.3" fill="none" stroke="#f2f2f2" stroke-width="1.8"/><rect x="13.1" y="11.2" width="5.6" height="8.5" rx="1.5" fill="#5f5f5f"/><circle cx="15.9" cy="15.5" r="1.4" fill="#8bb85a"/></svg>
<div class="vt" style="left:1058px;top:369px;font-size:23.4px">Resource Manager</div>
<svg class="abs" style="left:1050px;top:360px" width="40" height="50" viewBox="1050 360 40 50"><path d="M1071 378.6L1076.8 387.8H1065.2z" fill="#6e6e6e"/><rect x="1060.1" y="390" width="9.8" height="9.9" fill="#6e6e6e"/><circle cx="1077" cy="395" r="4.9" fill="#6e6e6e"/></svg>
<div class="vt" style="left:1058px;top:1143px;font-size:24.1px">Layout Captures</div>
<svg class="abs" style="left:1050px;top:1140px" width="40" height="40" viewBox="1050 1140 40 40"><path d="M1058.1 1163.8V1150.2H1077.9M1068.2 1166.9H1062.3V1154.9H1079.8V1159.4" fill="none" stroke="#636363" stroke-width="1.8"/><circle cx="1075" cy="1165" r="4.1" fill="none" stroke="#636363" stroke-width="1.8"/><path d="M1077.9 1168L1082.4 1172.4" stroke="#636363" stroke-width="2.6"/></svg>
<div class="vt" style="left:1058px;top:1350px"><u style="text-decoration-thickness:2px;text-underline-offset:3px">Z</u>: Structure</div>
<svg class="abs" style="left:1050px;top:1355px" width="40" height="40" viewBox="1050 1355 40 40"><rect x="1072.1" y="1362" width="7.8" height="7.8" fill="#6a6a6a"/><rect x="1062.1" y="1372" width="7.8" height="7.8" fill="#6a6a6a"/><rect x="1072.1" y="1372" width="7.8" height="7.8" fill="#6a6a6a"/></svg>
<div class="vt" style="left:1058px;top:1579px;font-size:24px">Build Variants</div>
<svg class="abs" style="left:1050px;top:1580px" width="40" height="40" viewBox="1050 1580 40 40"><path d="M1058.1 1607.6A12.9 12.1 0 0 1 1083.9 1607.6z" fill="#6e6e6e"/><path d="M1060.8 1593.3L1065 1597.5M1081.2 1593.3L1077 1597.5" stroke="#6e6e6e" stroke-width="2.2" stroke-linecap="round"/></svg>
<div class="vt" style="left:1058px;top:1782px;font-size:24.6px"><u style="text-decoration-thickness:2px;text-underline-offset:3px">2</u>: Favorites</div>

</body></html>
